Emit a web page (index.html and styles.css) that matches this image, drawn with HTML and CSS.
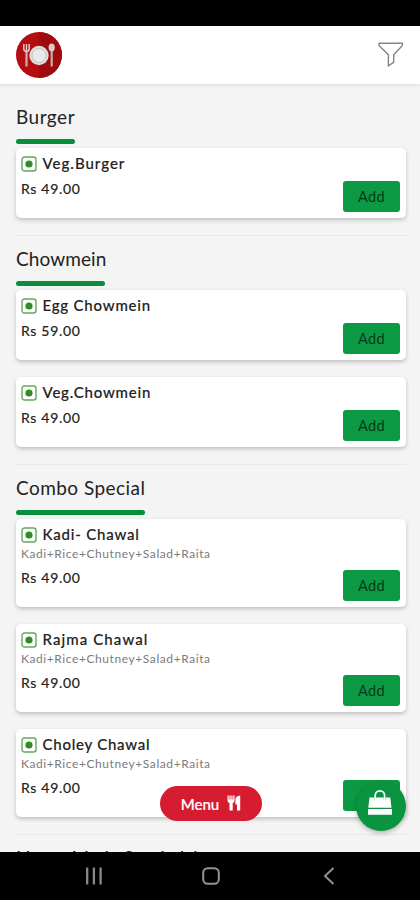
FILE: index.html
```
<!DOCTYPE html>
<html lang="en">
<head>
<meta charset="utf-8">
<meta name="viewport" content="width=device-width, initial-scale=1">
<title>Restaurant menu</title>
<link rel="stylesheet" href="styles.css">
</head>
<body>
<svg class="defs" width="0" height="0">
  <symbol id="veg" viewBox="0 0 16 16">
    <rect x="1" y="1" width="14" height="14" rx="2.5" fill="#fff" stroke="#62a95b" stroke-width="1.4"/>
    <circle cx="8" cy="8" r="3.6" fill="#318c27"/>
  </symbol>
</svg>
<div class="phone">
  <div class="status"></div>
  <header class="top">
    <svg class="logo" viewBox="0 0 46 46">
      <circle cx="23" cy="23" r="23" fill="#b30d12"/>
      <path d="M23 0a23 23 0 0 1 0 46z" fill="#9d0b0f"/>
      <circle cx="23" cy="23.5" r="9.7" fill="#dcdcdc"/>
      <circle cx="23" cy="23.5" r="7" fill="#e9e9e9" stroke="#bdbdbd" stroke-width=".8"/>
      <path d="M10.5 19v15.5" stroke="#d3aaaa" stroke-width="2.2"/>
      <path d="M7.8 12v4.5q0 3 2.7 3t2.7-3V12M10.5 12v7" fill="none" stroke="#dfc5c5" stroke-width="1.5"/>
      <path d="M35.7 19v15.5" stroke="#d3aaaa" stroke-width="2.2"/>
      <ellipse cx="35.7" cy="15.5" rx="3.1" ry="4" fill="#dccaca"/>
    </svg>
    <svg class="filter" viewBox="0 0 26 26">
      <path d="M1 1.2h23.4v2.3l-8.700 9.200v7.400L10.400 24V12.700L1 3.500z" fill="none" stroke="#858585" stroke-width="1.400" stroke-linejoin="round"/>
    </svg>
  </header>
  <main class="list">
    <section class="group">
      <h2 class="title"><span class="w-burger">Burger</span></h2>
      <article class="card">
        <h3 class="name"><svg class="veg"><use href="#veg"/></svg><span class="w-vegburger">Veg.Burger</span></h3>
        <p class="price">Rs 49.00</p><button class="add">Add</button>
      </article>
    </section>
    <section class="group">
      <h2 class="title"><span class="w-chowmein">Chowmein</span></h2>
      <article class="card">
        <h3 class="name"><svg class="veg"><use href="#veg"/></svg><span class="w-egg">Egg Chowmein</span></h3>
        <p class="price">Rs 59.00</p><button class="add">Add</button>
      </article>
      <article class="card">
        <h3 class="name"><svg class="veg"><use href="#veg"/></svg><span class="w-vegchow">Veg.Chowmein</span></h3>
        <p class="price">Rs 49.00</p><button class="add">Add</button>
      </article>
    </section>
    <section class="group">
      <h2 class="title"><span class="w-combo">Combo Special</span></h2>
      <article class="card tall">
        <h3 class="name"><svg class="veg"><use href="#veg"/></svg><span class="w-kadi">Kadi- Chawal</span></h3>
        <p class="desc">Kadi+Rice+Chutney+Salad+Raita</p>
        <p class="price">Rs 49.00</p><button class="add">Add</button>
      </article>
      <article class="card tall">
        <h3 class="name"><svg class="veg"><use href="#veg"/></svg><span class="w-rajma">Rajma Chawal</span></h3>
        <p class="desc">Kadi+Rice+Chutney+Salad+Raita</p>
        <p class="price">Rs 49.00</p><button class="add">Add</button>
      </article>
      <article class="card tall">
        <h3 class="name"><svg class="veg"><use href="#veg"/></svg><span class="w-choley">Choley Chawal</span></h3>
        <p class="desc">Kadi+Rice+Chutney+Salad+Raita</p>
        <p class="price">Rs 49.00</p><button class="add" aria-label="Add"></button>
      </article>
    </section>
    <section class="group">
      <h2 class="title next"><span>Home Made Sandwich</span></h2>
    </section>
  </main>
  <button class="menu">Menu
    <svg class="cutlery" viewBox="0 0 14 16"><path d="M.5.4v5q0 2 2 2.500V15.600h3.200V7.900Q7.500 7.400 7.500 5.400V.4H6.200v4H5.500V.4H4.300v4H3.600V.4H2.400v4H1.700V.4zM13.200.4v15.200h-3.200V9.500H8.400V4.500q0-3.700 4.800-4.100z" fill="#fff"/></svg>
  </button>
  <button class="cart" aria-label="Cart">
    <svg class="bag" viewBox="0 0 26 26"><path d="M8.200 12V6.500a4.700 4.700 0 0 1 9.400 0V12" fill="none" stroke="#fff" stroke-width="1.700"/><path d="M2.500 8.500h4.800v3h1.800v-3h7.600v3h1.800v-3h4.800l1.200 10.200H1.300zM1 20h24v5.800H1z" fill="#fff"/></svg>
  </button>
  <nav class="nav">
    <svg viewBox="0 0 18 18"><path d="M2.200.5v17M8.900.5v17M15.600.5v17" stroke="#888" stroke-width="2.300" fill="none"/></svg>
    <svg viewBox="0 0 18 18"><rect x="1.200" y="1.200" width="15.600" height="15.600" rx="4.500" stroke="#949494" stroke-width="2" fill="none"/></svg>
    <svg viewBox="0 0 18 18"><path d="M14.500 1 6 9l8.500 8" stroke="#949494" stroke-width="1.900" fill="none"/></svg>
  </nav>
</div>
</body>
</html>
```
FILE: styles.css
```
* { box-sizing: border-box; }
body { margin: 0; font-family: Lato, "Open Sans", sans-serif; color: #222; }
h2, h3, p { margin: 0; }
button { border: 0; padding: 0; font-family: inherit; }
.defs { position: absolute; }
.phone { position: relative; display: flex; flex-direction: column; width: 420px; height: 900px; overflow: hidden; background: #f4f4f4; }
.status { flex: none; height: 26px; background: #000; }
.top { flex: none; display: flex; align-items: center; justify-content: space-between; height: 58px; padding: 0 16px; background: #fff; box-shadow: 0 1px 4px #0000001c; }
.logo { width: 46px; height: 46px; }
.filter { width: 26px; height: 26px; }
.list { flex: 1; min-height: 0; overflow: hidden; padding: 10px 14px 0 16px; }
.group + .group { border-top: 1px solid #e8e8e8; }
.title { display: flex; height: 54px; font-size: 19px; font-weight: 400; line-height: 45px; white-space: nowrap; }
.title span { display: flex; flex-direction: column; height: 50px; }
.title span::after { content: ""; height: 5px; border-radius: 2.5px; background: #098e3b; }
.title.next { line-height: 46px; }
.card { display: grid; grid-template-columns: 1fr 57px; grid-template-rows: 29px 1fr; height: 70px; margin-bottom: 17px; padding: 0 6px 0 5px; background: #fff; border-radius: 5px; box-shadow: 0 2px 4px #00000038; }
.card.tall { grid-template-rows: 29px 18px 1fr; height: 88px; }
.name { grid-column: 1 / 3; display: flex; align-items: center; gap: 5.5px; height: 29px; padding-top: 2px; font-size: 15px; font-weight: 500; line-height: 20px; white-space: nowrap; -webkit-text-stroke: .15px; }
.name span { margin-top: -2px; }
.veg { width: 16px; height: 16px; }
.desc { grid-column: 1 / 3; font-size: 12px; line-height: 12px; color: #7b7b7b; letter-spacing: .58px; white-space: nowrap; }
.price { font-size: 14px; line-height: 24px; letter-spacing: .68px; -webkit-text-stroke: .2px; }
.add { align-self: end; height: 31px; margin-bottom: 6px; border-radius: 3px; background: #0b9a43; color: #063818; font-size: 14.5px; letter-spacing: .3px; }
.w-burger { width: 59px; letter-spacing: .5px; }
.w-chowmein { width: 89px; letter-spacing: .1px; }
.w-combo { width: 129px; letter-spacing: .45px; }
.w-vegburger { letter-spacing: 1px; }
.w-egg, .w-vegchow { letter-spacing: .8px; }
.w-kadi { letter-spacing: .8px; }
.w-rajma { letter-spacing: 1.1px; }
.w-choley { letter-spacing: .75px; }
.menu { position: absolute; left: 160px; top: 786px; display: flex; align-items: center; justify-content: center; gap: 8px; width: 102px; height: 35px; border-radius: 18px; background: #d61c30; color: #fff; font-size: 15px; font-weight: 500; -webkit-text-stroke: .2px; }
.cutlery { width: 14px; height: 16px; margin-top: -2px; }
.cart { position: absolute; left: 356px; top: 781px; display: flex; align-items: center; justify-content: center; width: 50px; height: 50px; padding: 0 2px 9px 0; border-radius: 50%; background: #0b9440; box-shadow: 0 2px 5px #00000045; }
.bag { width: 26px; height: 26px; }
.nav { flex: none; display: flex; gap: 99px; height: 48px; padding: 15px 0 0 85px; background: #000; }
.nav svg { width: 18px; height: 18px; }
```
